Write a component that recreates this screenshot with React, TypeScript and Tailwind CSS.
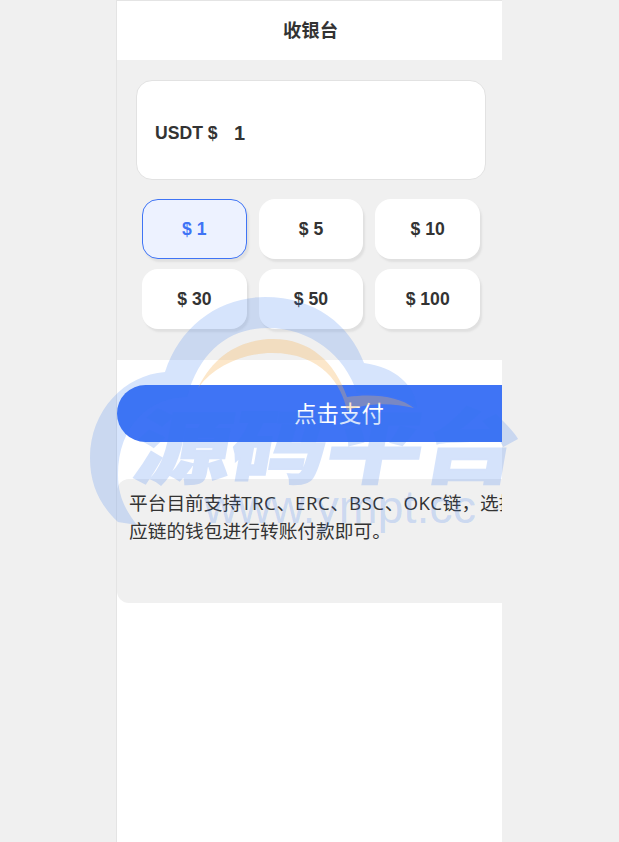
import React from "react";

const amounts = ["$ 1", "$ 5", "$ 10", "$ 30", "$ 50", "$ 100"];

function Watermark() {
  return (
    <svg
      className="pointer-events-none absolute left-0 top-0"
      width="619"
      height="842"
      viewBox="0 0 619 842"
    >
      <path
        d="M118 522C100 505 90 485 90 458C90 410 125 375 165 372C180 325 220 297 265 297C315 297 350 325 364 363C395 367 415 385 417 408C405 398 385 393 357 393C345 355 310 328 268 328C230 328 200 350 187 397C150 397 118 425 118 475C118 495 125 510 137 525Z"
        fill="rgba(50,118,240,0.2)"
      />
      <path
        d="M198 388C215 352 245 339 273 339C310 339 335 362 347 397C375 393 400 397 414 408C392 403 368 402 347 411C342 385 322 353 272 353C245 353 215 365 198 388Z"
        fill="rgba(245,180,90,0.32)"
      />
      <g opacity="0.2">
        <text
          transform="translate(131 477) skewX(-10) scale(1.2 1)"
          fontFamily="'Noto Sans CJK SC', sans-serif"
          fontWeight="900"
          fontSize="80"
          fill="#3276f0"
          stroke="#3276f0"
          strokeWidth="1.5"
        >
          源码平台
        </text>
      </g>
      <text
        x="204"
        y="523"
        fontFamily="'Liberation Sans', sans-serif"
        fontSize="46"
        textLength="272"
        lengthAdjust="spacingAndGlyphs"
        fill="rgba(50,118,240,0.2)"
      >
        www.ympt.cc
      </text>
    </svg>
  );
}

export default function App() {
  return (
    <div className="relative h-[842px] overflow-hidden bg-[#f0f0f0]">
      <div className="ml-[116px] h-[842px] w-[386px] overflow-hidden border-l border-t border-[#e4e4e4] bg-white font-['Liberation_Sans','Noto_Sans_CJK_SC',sans-serif] text-[#333]">
        <div className="flex h-[59px] items-center justify-center pl-[2px] text-[18.4px] font-bold">收银台</div>

        <div className="h-[300px] bg-[#f0f0f0] pl-[19px] pr-4 pt-5">
          <div className="flex h-[100px] w-[350px] items-center rounded-2xl border border-[#e2e2e2] bg-white pl-[18px] pt-[6px]">
            <span className="w-[79px] text-[17.6px] font-bold">USDT $</span>
            <span className="text-xl font-bold">1</span>
          </div>
          <div className="ml-[6px] mt-[19px] grid w-[338px] grid-cols-3 gap-x-3 gap-y-[10px]">
            {amounts.map((a, i) => (
              <div
                key={a}
                className={
                  i === 0
                    ? "flex h-[60px] items-center justify-center rounded-2xl border border-[#3f74f5] bg-[#edf2ff] text-[17.6px] font-bold text-[#3f74f5] shadow-[2px_3px_2px_#e0e0e0]"
                    : "flex h-[60px] items-center justify-center rounded-2xl bg-white text-[17.6px] font-bold shadow-[2px_3px_2px_#e0e0e0]"
                }
              >
                {a}
              </div>
            ))}
          </div>
        </div>

        <div className="w-[444px] font-['Open_Sans','Noto_Sans_CJK_SC',sans-serif]">
          <div className="h-[119px] pt-[25px]">
            <div className="flex h-[57px] items-center justify-center rounded-l-[29px] bg-[#3f74f5] text-[22.4px] text-white">
              点击支付
            </div>
          </div>
          <div className="h-[124px] rounded-xl bg-[#f0f0f0] px-3 pt-[10px] text-[18.72px] leading-[28px] text-[#333]">
            平台目前支持<span className="tracking-[0.5px]">TRC</span>、<span className="tracking-[0.5px]">ERC</span>、<span className="tracking-[0.5px]">BSC</span>、<span className="tracking-[0.5px]">OKC</span>链{"\uFF0C"}选择对应链的钱包进行转账付款即可。
          </div>
        </div>
      </div>
      <Watermark />
    </div>
  );
}
